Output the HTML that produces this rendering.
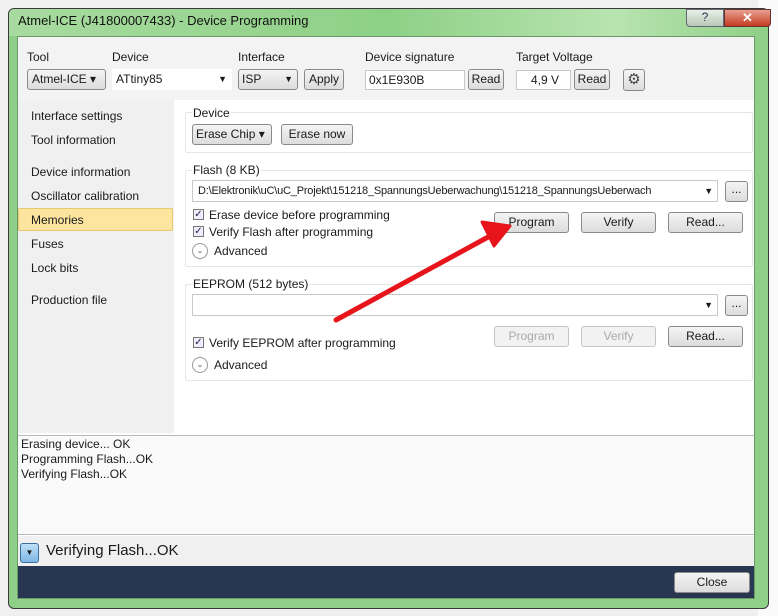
<!DOCTYPE html>
<html><head><style>
*{margin:0;padding:0;box-sizing:border-box}
body{width:778px;height:616px;position:relative;overflow:hidden;background:#e8e8e8;font-family:"Liberation Sans",sans-serif;font-size:12px;color:#1a1a1a}
.a{position:absolute}
.btn{position:absolute;border:1px solid #8a8a8a;border-radius:3px;background:linear-gradient(#f4f4f4,#dcdcdc);text-align:center;font-size:12px;line-height:19px}
.dis{color:#aaa;border-color:#c4c4c4;background:#f2f2f2}
.inp{position:absolute;background:#fff;border:1px solid #c8c8c8;font-size:12px;line-height:18px;padding-left:3px;white-space:nowrap;overflow:hidden}
.grp{position:absolute;border:1px solid #e6e6e6;border-radius:2px;background:#fff}
.cb{position:absolute;width:11px;height:11px;border:1px solid #777;background:#eef;font-size:10px;line-height:9px;text-align:center;color:#224}
.circ{position:absolute;width:16px;height:16px;border:1px solid #999;border-radius:50%;font-size:8px;line-height:14px;text-align:center;color:#555}
.nav{position:absolute;left:31px;font-size:12px}
</style></head><body>
<div class="a" style="left:0;top:0;width:778px;height:616px;background:#f0f0f0"></div>
<div class="a" style="left:758px;top:0;width:20px;height:616px;background:#fafafa"></div>
<div class="a" style="left:8px;top:8px;width:761px;height:601px;background:#8fcf87;border:1px solid #3a3a3a;border-radius:6px"></div>
<div class="a" style="left:9px;top:9px;width:759px;height:27px;background:linear-gradient(90deg,#a8dba0,#8ed086 50%,#b8e4b0 80%,#8fcf87);border-radius:5px 5px 0 0"></div>
<div class="a" style="left:18px;top:13px;font-size:13px;color:#111">Atmel-ICE (J41800007433) - Device Programming</div>
<div class="a" style="left:686px;top:9px;width:38px;height:18px;background:linear-gradient(#e8f0e8,#b8c8b8);border:1px solid #667;border-radius:0 0 0 4px;text-align:center;font-size:12px;color:#335">?</div>
<div class="a" style="left:724px;top:9px;width:47px;height:18px;background:linear-gradient(#e8a090,#c43a20);border:1px solid #633;border-radius:0 0 4px 0;text-align:center;font-size:13px;font-weight:bold;color:#fff">✕</div>
<div class="a" style="left:17px;top:36px;width:738px;height:563px;background:#fff;border:1px solid #6a9a68"></div>
<div class="a" style="left:18px;top:37px;width:736px;height:63px;background:#f3f3f3"></div>
<div class="a" style="left:27px;top:50px">Tool</div>
<div class="a" style="left:112px;top:50px">Device</div>
<div class="a" style="left:238px;top:50px">Interface</div>
<div class="a" style="left:365px;top:50px">Device signature</div>
<div class="a" style="left:516px;top:50px">Target Voltage</div>
<div class="btn" style="left:27px;top:69px;width:79px;height:21px;text-align:left;padding-left:4px">Atmel-ICE ▾</div>
<div class="inp" style="left:112px;top:69px;width:120px;height:21px;border-color:#fff">ATtiny85<span style="position:absolute;right:4px;font-size:9px">▼</span></div>
<div class="btn" style="left:238px;top:69px;width:60px;height:21px;text-align:left;padding-left:3px">ISP<span style="position:absolute;right:4px;font-size:9px">▼</span></div>
<div class="btn" style="left:304px;top:69px;width:40px;height:21px">Apply</div>
<div class="inp" style="left:365px;top:70px;width:100px;height:20px">0x1E930B</div>
<div class="btn" style="left:468px;top:69px;width:36px;height:21px">Read</div>
<div class="inp" style="left:516px;top:70px;width:55px;height:20px;text-align:center">4,9 V</div>
<div class="btn" style="left:574px;top:69px;width:36px;height:21px">Read</div>
<div class="btn" style="left:623px;top:69px;width:22px;height:22px;font-size:15px;line-height:20px;color:#444">⚙</div>
<div class="a" style="left:18px;top:100px;width:156px;height:333px;background:#f0f0f0"></div>
<div class="nav" style="top:109px">Interface settings</div>
<div class="nav" style="top:133px">Tool information</div>
<div class="nav" style="top:165px">Device information</div>
<div class="nav" style="top:189px">Oscillator calibration</div>
<div class="a" style="left:18px;top:208px;width:155px;height:23px;background:#fde5a0;border:1px solid #e8c870;border-radius:2px"></div>
<div class="nav" style="top:213px">Memories</div>
<div class="nav" style="top:237px">Fuses</div>
<div class="nav" style="top:261px">Lock bits</div>
<div class="nav" style="top:293px">Production file</div>
<div class="grp" style="left:185px;top:112px;width:568px;height:41px"></div>
<div class="a" style="left:192px;top:106px;background:#fff;padding:0 1px">Device</div>
<div class="btn" style="left:192px;top:124px;width:80px;height:21px;text-align:left;padding-left:3px">Erase Chip ▾</div>
<div class="btn" style="left:281px;top:124px;width:72px;height:21px">Erase now</div>
<div class="grp" style="left:185px;top:170px;width:568px;height:97px"></div>
<div class="a" style="left:192px;top:163px;background:#fff;padding:0 1px">Flash (8 KB)</div>
<div class="inp" style="left:192px;top:180px;width:526px;height:22px;line-height:20px;padding-left:5px;font-size:11px;letter-spacing:-0.2px">D:\Elektronik\uC\uC_Projekt\151218_SpannungsUeberwachung\151218_SpannungsUeberwach<span style="position:absolute;right:0;padding:0 4px;background:#fff;font-size:9px">▼</span></div>
<div class="btn" style="left:725px;top:181px;width:23px;height:21px;line-height:15px">...</div>
<div class="cb" style="left:193px;top:209px">✓</div><div class="a" style="left:209px;top:208px">Erase device before programming</div>
<div class="cb" style="left:193px;top:226px">✓</div><div class="a" style="left:209px;top:225px">Verify Flash after programming</div>
<div class="circ" style="left:192px;top:243px">⌄</div><div class="a" style="left:214px;top:244px">Advanced</div>
<div class="btn" style="left:494px;top:212px;width:75px;height:21px">Program</div>
<div class="btn" style="left:581px;top:212px;width:75px;height:21px">Verify</div>
<div class="btn" style="left:668px;top:212px;width:75px;height:21px">Read...</div>
<div class="grp" style="left:185px;top:284px;width:568px;height:97px"></div>
<div class="a" style="left:192px;top:277px;background:#fff;padding:0 1px">EEPROM (512 bytes)</div>
<div class="inp" style="left:192px;top:294px;width:526px;height:22px"><span style="position:absolute;right:4px;font-size:9px;top:1px">▼</span></div>
<div class="btn" style="left:725px;top:295px;width:23px;height:21px;line-height:15px">...</div>
<div class="btn dis" style="left:494px;top:326px;width:75px;height:21px">Program</div>
<div class="btn dis" style="left:581px;top:326px;width:75px;height:21px">Verify</div>
<div class="btn" style="left:668px;top:326px;width:75px;height:21px">Read...</div>
<div class="cb" style="left:193px;top:337px">✓</div><div class="a" style="left:209px;top:336px">Verify EEPROM after programming</div>
<div class="circ" style="left:192px;top:357px">⌄</div><div class="a" style="left:214px;top:358px">Advanced</div>
<svg class="a" style="left:0;top:0" width="778" height="616"><line x1="336" y1="320" x2="490" y2="236" stroke="#e8141c" stroke-width="5" stroke-linecap="round"/><polygon points="510,226 482,222 494,246" fill="#e8141c" stroke="#e8141c" stroke-width="3" stroke-linejoin="round"/></svg>
<div class="a" style="left:18px;top:435px;width:736px;height:100px;background:#fafafa;border-top:1px solid #bbb;border-bottom:1px solid #bbb"></div>
<div class="a" style="left:21px;top:437px;line-height:15px;font-size:12px">Erasing device... OK<br>Programming Flash...OK<br>Verifying Flash...OK</div>
<div class="a" style="left:18px;top:536px;width:736px;height:30px;background:#f0f0f0"></div>
<div class="a" style="left:20px;top:543px;width:19px;height:20px;border:1px solid #3a6fa0;border-radius:3px;background:linear-gradient(#bfe0f8,#7eb6e4);font-size:8px;text-align:center;line-height:18px">▼</div>
<div class="a" style="left:46px;top:542px;font-size:15px">Verifying Flash...OK</div>
<div class="a" style="left:18px;top:566px;width:736px;height:32px;background:#283651"></div>
<div class="btn" style="left:674px;top:572px;width:76px;height:21px">Close</div>
</body></html>
